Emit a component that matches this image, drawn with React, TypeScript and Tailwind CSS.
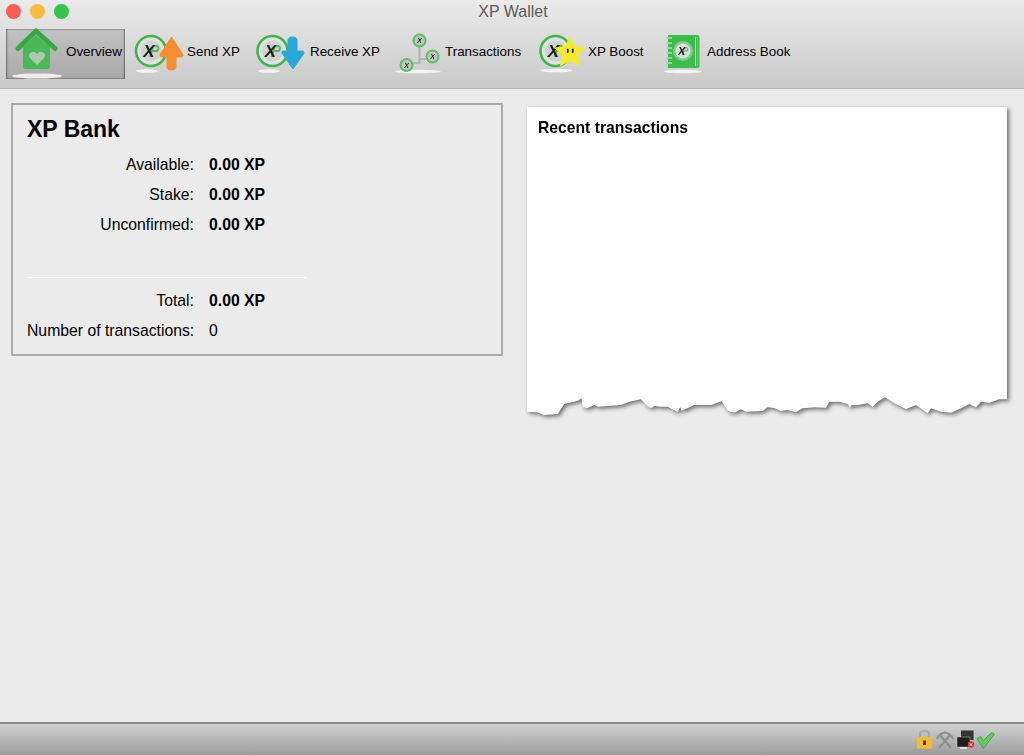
import type { ReactNode } from 'react';

const tornEdge = [
  [38, 95], [70, 97], [88, 105], [130, 102], [150, 72], [190, 62], [202, 55], [205, 80], [218, 85], [240, 75],
  [250, 80], [320, 75], [345, 65], [380, 58], [395, 75], [410, 85], [420, 78], [440, 80], [460, 80], [490, 96],
  [498, 82], [502, 92], [540, 75], [590, 75], [622, 64], [640, 92], [660, 98], [680, 88], [695, 95], [745, 93],
  [760, 82], [780, 84], [800, 93], [820, 90], [845, 97], [865, 85], [900, 82], [935, 83], [945, 65], [975, 65],
  [1000, 72], [1007, 85], [1010, 76], [1030, 75], [1060, 70], [1075, 80], [1090, 65], [1112, 52], [1140, 70],
  [1175, 87], [1205, 75], [1240, 100], [1250, 85], [1280, 95], [1310, 98], [1340, 85], [1365, 72], [1385, 82],
  [1400, 65], [1425, 68], [1455, 58], [1478, 58],
];

function CoinMark({ cx, cy, size }: { cx: number; cy: number; size: number }) {
  const u = size / 17;
  return (
    <>
      {/* green swoosh of the coin logo */}
      <path
        d={`M${cx - 1 * u} ${cy + 6 * u} L${cx + 2.500 * u} ${cy - 5 * u} H${cx + 6 * u} Q${cx + 9 * u} ${cy - 3 * u} ${cx + 6 * u} ${cy} H${cx + 2 * u}`}
        fill="none"
        stroke="#4cb85a"
        strokeWidth={1.800 * u}
      />
      <text x={cx - 2 * u} y={cy + 6 * u} textAnchor="middle" fontFamily="'Liberation Sans', sans-serif" fontStyle="italic" fontWeight="bold" fontSize={size} fill="#1c1c1c">
        X
      </text>
    </>
  );
}

function Coin({ cx, cy }: { cx: number; cy: number }) {
  return (
    <>
      <circle cx={cx} cy={cy} r="15" fill="#dfe2df" stroke="#3fb54b" strokeWidth="2.600" />
      <circle cx={cx} cy={cy} r="10.500" fill="#cfd2cf" />
      <CoinMark cx={cx} cy={cy} size={17} />
    </>
  );
}

function Base({ cx, cy, rx }: { cx: number; cy: number; rx: number }) {
  return <ellipse cx={cx} cy={cy} rx={rx} ry="1.800" fill="#f4f4f4" />;
}

function HouseIcon() {
  return (
    <svg className="h-[52px] w-[53px] shrink-0 blur-[0.4px]" viewBox="11 28 53 52">
      <ellipse cx="37" cy="76" rx="25" ry="2.600" fill="#eeeeee" />
      <path d="M23 47 L36 35 L50 47 V66 Q50 69 47 69 H26 Q23 69 23 66 Z" fill="#48b956" />
      <path d="M18 48.500 L36 31 L55 48.500" fill="none" stroke="#36a947" strokeWidth="5" strokeLinecap="round" strokeLinejoin="round" />
      <path d="M37 65 L30 58 Q27.500 54.500 31 52.500 Q34.500 50.500 37 54 Q39.500 50.500 43 52.500 Q46.500 54.500 44 58 Z" fill="#aec7ae" />
    </svg>
  );
}

function SendIcon() {
  return (
    <svg className="h-[52px] w-[52px] shrink-0 blur-[0.4px]" viewBox="133 28 52 52">
      <Base cx={147} cy={71} rx={11} />
      <Coin cx={151} cy={51} />
      <path d="M171.500 37 L182.500 54 Q184 57 181 57 H176 V67 Q176 70 171.500 70 Q167 70 167 67 V57 H162 Q159 57 160.500 54 Z" fill="#f78d2c" stroke="#f78d2c" strokeWidth="1" strokeLinejoin="round" />
    </svg>
  );
}

function ReceiveIcon() {
  return (
    <svg className="h-[52px] w-[53px] shrink-0 blur-[0.4px]" viewBox="255 28 53 52">
      <Base cx={269} cy={71} rx={11} />
      <Coin cx={272.500} cy={51} />
      <path d="M293 69 L282.500 54 Q281 51 284 51 H288 V40 Q288 37 292.500 37 Q297 37 297 40 V51 H302 Q305 51 303.500 54 Z" fill="#2aa7d9" stroke="#2aa7d9" strokeWidth="1" strokeLinejoin="round" />
    </svg>
  );
}

function TransactionsIcon() {
  const nodes = [
    [419.5, 40.5],
    [432.5, 56.5],
    [406.5, 65],
  ];
  return (
    <svg className="h-[52px] w-[48px] shrink-0 blur-[0.4px]" viewBox="395 28 48 52">
      <Base cx={418} cy={71.500} rx={23} />
      <path d="M419.500 46 V63 H412 M419.500 59 H427" fill="none" stroke="#b4b4b4" strokeWidth="2.200" />
      {nodes.map(([cx, cy]) => (
        <g key={cx}>
          <circle cx={cx} cy={cy} r="6" fill="#bfc7bf" stroke="#5fbd6b" strokeWidth="2" />
          <text x={cx} y={cy + 2.500} textAnchor="middle" fontFamily="'Liberation Sans', sans-serif" fontStyle="italic" fontWeight="bold" fontSize="7" fill="#222222">
            X
          </text>
        </g>
      ))}
    </svg>
  );
}

function BoostIcon() {
  return (
    <svg className="h-[52px] w-[48px] shrink-0 blur-[0.4px]" viewBox="538 28 48 52">
      <Base cx={556.500} cy={70.500} rx={16} />
      <Coin cx={555.500} cy={51} />
      <path d="M570 37 L574.500 46.500 L585 48 L577.500 55 L579.500 65.500 L570 60.500 L560.500 65.500 L562.500 55 L555 48 L565.500 46.500 Z" fill="#f6ea2b" stroke="#f6ea2b" strokeWidth="1" strokeLinejoin="round" />
      <rect x="566.800" y="48.500" width="1.800" height="4.500" rx="0.900" fill="#222222" />
      <rect x="571.800" y="48.500" width="1.800" height="4.500" rx="0.900" fill="#222222" />
    </svg>
  );
}

function BookIcon() {
  return (
    <svg className="h-[52px] w-[43px] shrink-0 blur-[0.4px]" viewBox="662 28 43 52">
      <Base cx={683} cy={71.500} rx={19} />
      <path d="M668 35 H697 Q699.500 35 699.500 37.500 V65.500 Q699.500 68 697 68 H668 Z" fill="#3dbb4d" />
      <path d="M695.500 37 V66" stroke="#a9dcb0" strokeWidth="1" />
      <path d="M697.800 37 V66" stroke="#7fcb8a" strokeWidth="0.800" />
      {[38, 43, 48, 53, 58, 63].map((y) => (
        <path key={y} d={`M666.500 ${y} H672`} stroke="#9edaa8" strokeWidth="1.800" />
      ))}
      <circle cx="683" cy="51" r="10" fill="#7dcf8b" />
      <circle cx="683" cy="51" r="7.500" fill="#d9dfd9" />
      <CoinMark cx={683} cy={51} size={11} />
    </svg>
  );
}

const toolbarItems: { label: string; icon: ReactNode; cls: string }[] = [
  {
    label: 'Overview',
    icon: <HouseIcon />,
    cls: 'w-[119px] pl-[5px] bg-gradient-to-b from-[#c2c2c2] to-[#a9a9a9] shadow-[inset_1px_0_2px_rgba(0,0,0,0.4),inset_-1px_0_2px_rgba(0,0,0,0.4)]',
  },
  { label: 'Send XP', icon: <SendIcon />, cls: 'w-[130px] pl-[8px]' },
  { label: 'Receive XP', icon: <ReceiveIcon />, cls: 'w-[140px]' },
  { label: 'Transactions', icon: <TransactionsIcon />, cls: 'w-[143px]' },
  { label: 'XP Boost', icon: <BoostIcon />, cls: 'w-[124px]' },
  { label: 'Address Book', icon: <BookIcon />, cls: 'w-[130px]' },
];

const bankRows = [
  { label: 'Available:', value: '0.00 XP' },
  { label: 'Stake:', value: '0.00 XP' },
  { label: 'Unconfirmed:', value: '0.00 XP' },
];

function Row({ label, value, bold = true }: { label: string; value: string; bold?: boolean }) {
  return (
    <div className="flex h-[30px] items-center text-[15.75px] text-black">
      <span className="w-[167px] whitespace-nowrap text-right">{label}</span>
      <span className={bold ? 'ml-[15px] font-bold' : 'ml-[15px]'}>{value}</span>
    </div>
  );
}

function StatusIcons() {
  return (
    <div className="flex items-center blur-[0.4px]">
      <svg className="h-[20px] w-[16px]" viewBox="917 730 16 20">
        <path d="M920 738 V734 Q920 731 924.500 731 Q929 731 929 734 V738" fill="none" stroke="#a8a8a8" strokeWidth="2" />
        <rect x="917" y="737" width="15" height="11.500" rx="1" fill="#f5bd2e" />
        <rect x="923" y="740.500" width="3" height="4.500" fill="#5a3b05" />
      </svg>
      <svg className="ml-[3px] h-[20px] w-[18px]" viewBox="936 730 18 20">
        <path d="M939 748 L950 735 M951 748 L940 735" stroke="#8f8f8f" strokeWidth="2.200" />
        <path d="M937 739 Q939 733 946 732.500 M953 739 Q951 733 944 732.500" fill="none" stroke="#8f8f8f" strokeWidth="2.200" />
      </svg>
      <svg className="ml-[2px] h-[20px] w-[19px]" viewBox="956 730 19 20">
        <rect x="961" y="730.500" width="12.500" height="9.500" fill="#333333" />
        <rect x="957" y="737" width="13" height="10" fill="#1e1e1e" stroke="#c7c7c7" strokeWidth="0.500" />
        <rect x="960" y="747" width="7" height="2" fill="#dddddd" />
        <circle cx="971" cy="744.500" r="3.200" fill="#d8353f" />
        <path d="M969.800 743.300 L972.200 745.700 M972.200 743.300 L969.800 745.700" stroke="#ffffff" strokeWidth="0.800" />
      </svg>
      <svg className="ml-[1px] h-[20px] w-[19px]" viewBox="976 730 19 20">
        <path d="M977 739 L980.500 736.500 L983.500 740.500 L991.500 732.500 L994.500 734 L983.500 748.500 Z" fill="#5fcb5c" stroke="#3c9c47" strokeWidth="0.800" />
      </svg>
    </div>
  );
}

export default function App() {
  return (
    <div className="flex h-[755px] w-[1024px] flex-col overflow-hidden bg-[#ebebeb] font-['Liberation_Sans',Arial,sans-serif]">
      {/* Title bar and toolbar */}
      <header className="h-[89px] shrink-0 border-b border-[#b4b4b4] bg-gradient-to-b from-[#ebebeb] to-[#c9c9c9]">
        <div className="relative h-[23px]">
          <div className="absolute left-[6px] top-[4px] flex gap-[9px]">
            <span className="h-[15px] w-[15px] rounded-full bg-[#fc5b57]" />
            <span className="h-[15px] w-[15px] rounded-full bg-[#fdbb40]" />
            <span className="h-[15px] w-[15px] rounded-full bg-[#33c748]" />
          </div>
          <div className="pl-[2px] pt-[2px] text-center text-[16px] leading-[19px] text-[#5b5b5b]">XP Wallet</div>
        </div>
        <nav className="mt-[6px] flex pl-[6px]">
          {toolbarItems.map((item) => (
            <button key={item.label} className={`flex h-[50px] items-center gap-[2px] ${item.cls}`}>
              {item.icon}
              <span className="mb-[4px] whitespace-nowrap text-[13.4px] text-black">{item.label}</span>
            </button>
          ))}
        </nav>
      </header>

      {/* Content */}
      <main className="flex flex-1 items-start pl-[11px] pt-[14px]">
        <section className="w-[492px] border-2 border-[#ababab] pb-[8px] pl-[14px] pt-[10px]">
          <h1 className="mb-[7px] text-[23px] font-bold leading-[28px] text-black">XP Bank</h1>
          {bankRows.map((row) => (
            <Row key={row.label} label={row.label} value={row.value} />
          ))}
          <div className="mb-[8px] mt-[37px] h-px w-[279px] bg-[#fbfbfb]" />
          <Row label="Total:" value="0.00 XP" />
          <Row label="Number of transactions:" value="0" bold={false} />
        </section>

        {/* Torn paper */}
        <section className="ml-[24px] mt-[4px] w-[480px] drop-shadow-[2px_2px_2px_rgba(0,0,0,0.55)]">
          <div className="h-[273px] bg-white pl-[11px] pt-[11px]">
            <h2 className="text-[15.7px] font-bold leading-[20px] text-black">Recent transactions</h2>
          </div>
          <svg className="block h-[40px] w-[480px]" viewBox="38 0 1440 120">
            <path d={`M38 0 L${tornEdge.map(([x, y]) => `${x} ${y}`).join(' L')} L1478 0 Z`} fill="#ffffff" />
          </svg>
        </section>
      </main>

      {/* Status bar */}
      <footer className="flex h-[33px] shrink-0 items-center justify-end border-t-2 border-[#8a8a8a] bg-gradient-to-b from-[#d2d2d2] to-[#9c9c9c] pr-[29px]">
        <StatusIcons />
      </footer>
    </div>
  );
}
